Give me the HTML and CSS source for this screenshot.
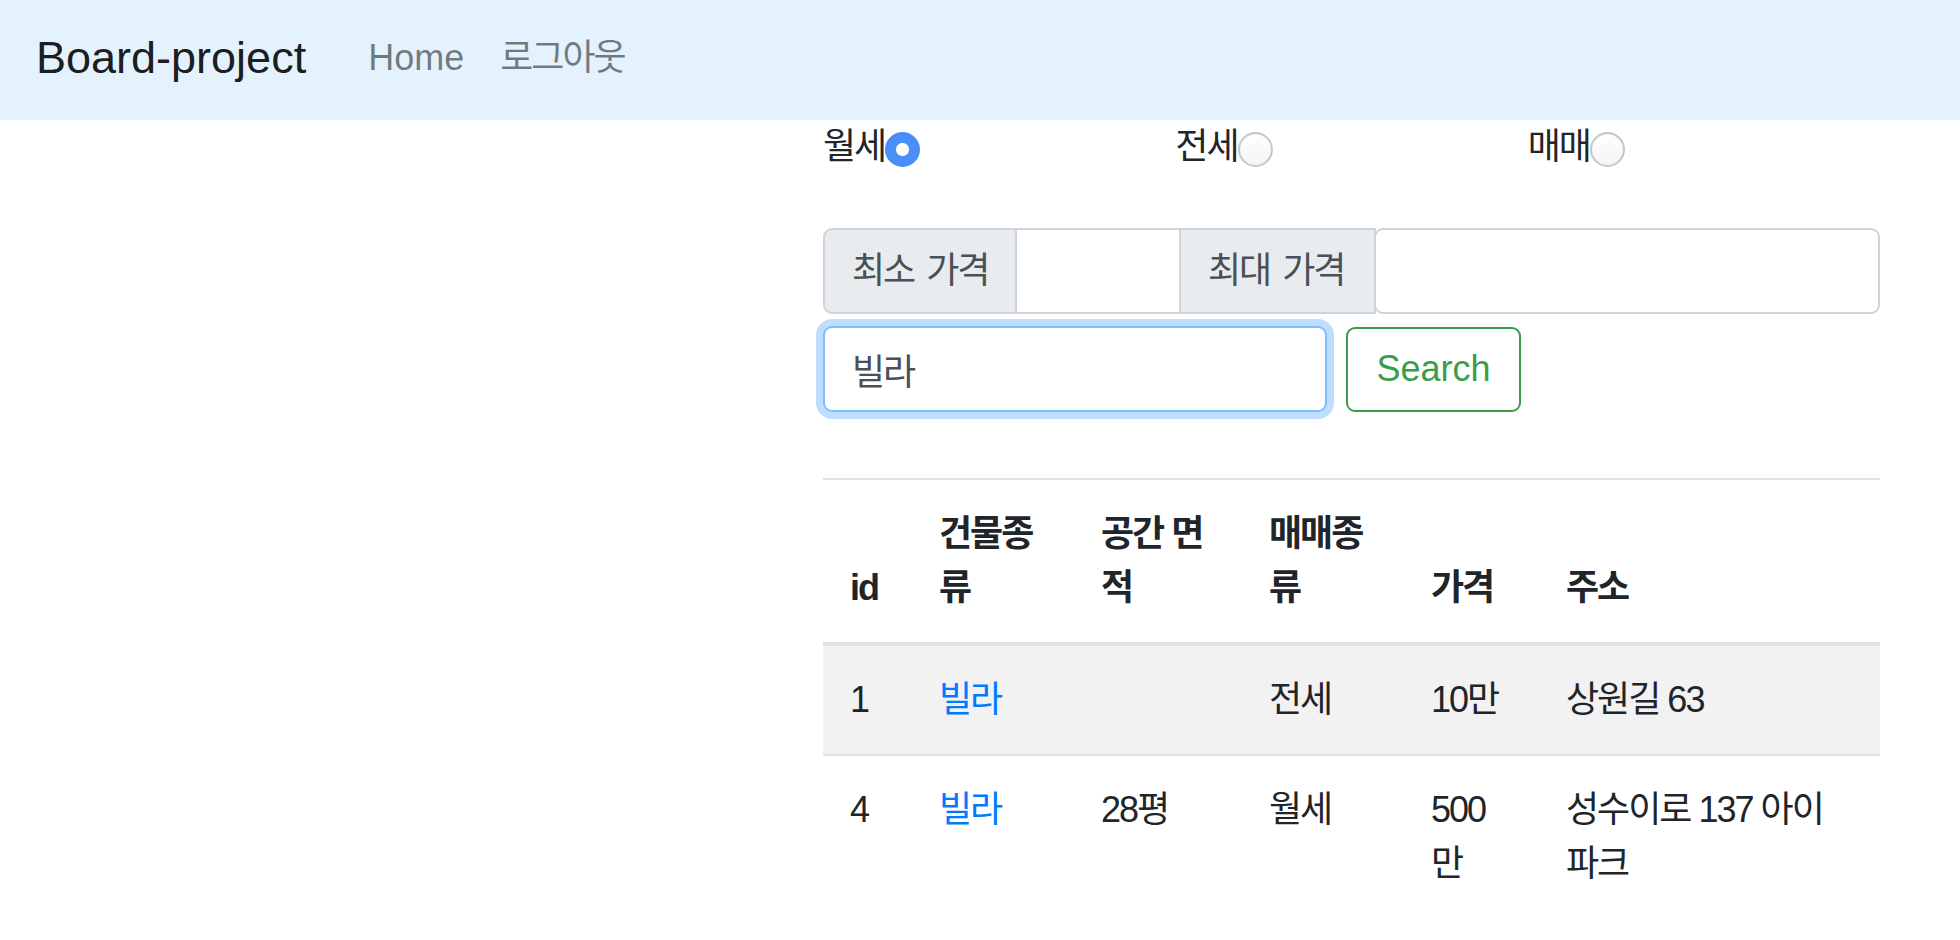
FILE: index.html
```html
<!DOCTYPE html>
<html lang="ko">
<head>
<meta charset="utf-8">
<title>Board-project</title>
<link rel="stylesheet" href="styles.css">
</head>
<body>
<nav class="navbar">
  <a class="brand" href="#">Board-project</a>
  <ul class="nav">
    <li><a class="nav-link" href="#">Home</a></li>
    <li><a class="nav-link ko" href="#">로그아웃</a></li>
  </ul>
</nav>
<main class="content">
  <div class="deal-types">
    <label class="deal ko">월세<input class="radio" type="radio" name="deal" checked></label>
    <label class="deal ko">전세<input class="radio" type="radio" name="deal"></label>
    <label class="deal ko">매매<input class="radio" type="radio" name="deal"></label>
  </div>
  <form class="search-form">
    <div class="price-group">
      <span class="addon addon-first ko">최소 가격</span>
      <input class="field field-min" type="text">
      <span class="addon addon-second ko">최대 가격</span>
      <input class="field field-max" type="text">
    </div>
    <div class="keyword-row">
      <input class="field keyword ko" type="search" value="빌라">
      <button class="btn-search" type="button">Search</button>
    </div>
  </form>
  <table class="results">
    <colgroup>
      <col class="c-id"><col class="c-type"><col class="c-area"><col class="c-deal"><col class="c-price"><col class="c-addr">
    </colgroup>
    <thead>
      <tr><th>id</th><th>건물종류</th><th>공간 면적</th><th>매매종류</th><th>가격</th><th>주소</th></tr>
    </thead>
    <tbody>
      <tr><td>1</td><td><a class="link" href="#">빌라</a></td><td></td><td>전세</td><td>10만</td><td>상원길 63</td></tr>
      <tr><td>4</td><td><a class="link" href="#">빌라</a></td><td>28평</td><td>월세</td><td>500만</td><td>성수이로 137 아이파크</td></tr>
    </tbody>
  </table>
</main>
</body>
</html>
```
FILE: styles.css
```css
* { box-sizing: border-box; }

html, body {
  margin: 0;
  padding: 0;
  background: #fff;
}

body {
  font-family: "Liberation Sans", "Noto Sans CJK KR", sans-serif;
  font-size: 36px;
  line-height: 54px;
  color: #212529;
  overflow: hidden;
}

.ko { letter-spacing: -2px; }

/* navbar */
.navbar {
  height: 120px;
  background: #e3f2fd;
  display: flex;
  align-items: center;
  padding: 0 36px 5px 36px;
}

.brand {
  font-size: 45px;
  line-height: 67px;
  color: rgba(0, 0, 0, 0.9);
  text-decoration: none;
  margin-right: 44px;
}

.nav {
  display: flex;
  list-style: none;
  margin: 0;
  padding: 0;
}

.nav-link {
  display: block;
  padding: 0 18px;
  color: rgba(0, 0, 0, 0.5);
  text-decoration: none;
}

/* content */
.content {
  margin: 0 80px 0 823px;
}

.deal-types {
  display: grid;
  grid-template-columns: repeat(3, 1fr);
  height: 54px;
}

.deal {
  display: flex;
  align-items: center;
}

.radio {
  appearance: none;
  -webkit-appearance: none;
  width: 35px;
  height: 35px;
  margin: 5px 0 0 0;
  border-radius: 50%;
  border: 2px solid #c6c6c6;
  background: linear-gradient(#fff, #f4f4f4);
  box-shadow: inset 0 1px 1px rgba(0, 0, 0, 0.05);
}

.radio:checked {
  border-color: #4a8ef8;
  background: radial-gradient(circle, #fff 0 6px, #4a8ef8 7px);
}

.search-form { margin: 54px 0 0 0; }

.price-group {
  display: flex;
  height: 86px;
}

.addon {
  display: flex;
  align-items: center;
  padding: 0 27px;
  background: #e9ecef;
  color: #495057;
  border: 2px solid #ced4da;
  white-space: nowrap;
  word-spacing: 4px;
}

.addon-first {
  width: 194px;
  border-radius: 9px 0 0 9px;
}

.addon-second {
  width: 197px;
  margin-left: -2px;
}

.field {
  font: inherit;
  color: #495057;
  background: #fff;
  border: 2px solid #ced4da;
  padding: 0 27px;
  outline: none;
}

.field-min {
  width: 166px;
  margin-left: -2px;
  border-radius: 0;
}

.field-max {
  flex: 1;
  min-width: 0;
  margin-left: -2px;
  border-radius: 9px;
}

.keyword-row {
  display: flex;
  align-items: center;
  margin-top: 12px;
}

.keyword {
  width: 504px;
  height: 86px;
  border-radius: 9px;
  border-color: #80bdff;
  box-shadow: 0 0 0 7px rgba(0, 123, 255, 0.25);
  -webkit-appearance: none;
  appearance: none;
}

.btn-search {
  font: inherit;
  height: 85px;
  width: 175px;
  margin-left: 19px;
  padding: 0 27px;
  color: #3a9d4a;
  background: transparent;
  border: 2px solid #3a9d4a;
  border-radius: 9px;
}

/* table */
.results {
  width: 100%;
  margin-top: 66px;
  border-collapse: collapse;
  table-layout: fixed;
  letter-spacing: -2px;
}

.c-id { width: 89px; }
.c-type { width: 162px; }
.c-area { width: 168px; }
.c-deal { width: 162px; }
.c-price { width: 135px; }
.c-addr { width: auto; }

.results th,
.results td {
  padding: 27px;
  text-align: left;
  vertical-align: top;
  border-top: 2px solid #dee2e6;
}

.results th {
  vertical-align: bottom;
  font-weight: bold;
  border-bottom: 4px solid #dee2e6;
}

.results tbody tr:nth-child(odd) { background: #f2f2f2; }

.link {
  color: #007bff;
  text-decoration: none;
}
```
